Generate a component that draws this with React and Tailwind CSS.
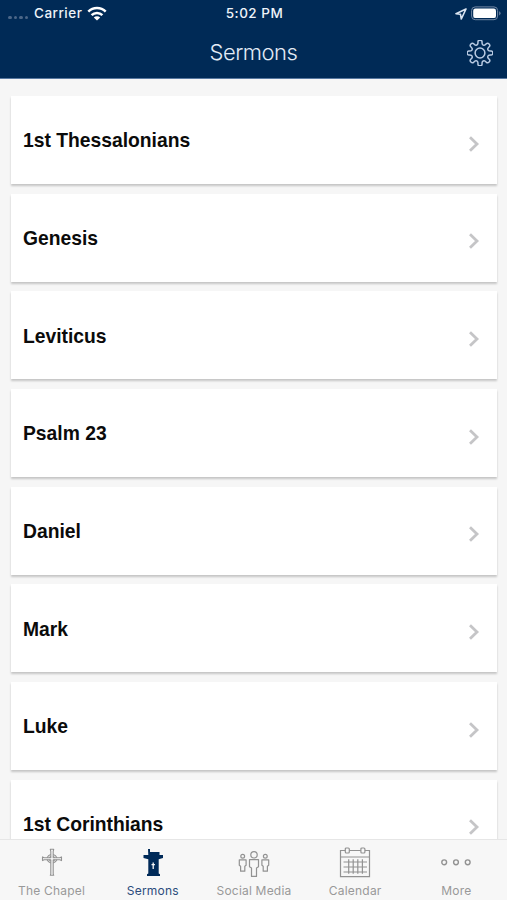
const books = [
  '1st Thessalonians',
  'Genesis',
  'Leviticus',
  'Psalm 23',
  'Daniel',
  'Mark',
  'Luke',
  '1st Corinthians',
];

// eight rounded teeth, drawn as curves between the midpoints of the corners
const gearPath = () => {
  const corners = [];
  for (let i = 0; i < 8; i++) {
    [[-22.5, 8.3], [-12, 9.3], [-9.5, 13], [9.5, 13], [12, 9.3]].forEach(([offset, r]) => {
      const a = ((i * 45 + offset) * Math.PI) / 180;
      corners.push([13 + r * Math.sin(a), 13 - r * Math.cos(a)]);
    });
  }
  const mid = (p, q) => `${((p[0] + q[0]) / 2).toFixed(2)} ${((p[1] + q[1]) / 2).toFixed(2)}`;
  const curves = corners.map((p, i) => {
    const next = corners[(i + 1) % corners.length];
    return `Q${p[0].toFixed(2)} ${p[1].toFixed(2)} ${mid(p, next)}`;
  });
  return `M${mid(corners[corners.length - 1], corners[0])}${curves.join('')}Z`;
};

const GearIcon = () => (
  <svg width="26" height="26" viewBox="0 0 26 26" fill="none" stroke="#b9cbe3" strokeWidth="1.5" strokeLinejoin="round">
    <path d={gearPath()} />
    <circle cx="13" cy="13" r="4.9" />
  </svg>
);

const WifiIcon = () => (
  <svg width="20" height="16" viewBox="0 0 20 16" fill="none" stroke="#fff" strokeWidth="2.5">
    <path d="M1.3 5.7a12.3 12.3 0 0 1 17.4 0" />
    <path d="M4.6 9.2a7.6 7.6 0 0 1 10.8 0" />
    <path d="M10 14.6L6.8 11.5a4.5 4.5 0 0 1 6.4 0Z" fill="#fff" stroke="none" />
  </svg>
);

const LocationIcon = () => (
  <svg width="12" height="12" viewBox="0 0 12 12" fill="none" stroke="#dbe5f1" strokeWidth="1.6" strokeLinejoin="round">
    <path d="M11 1L1 5.7l4.5.6.8 4.7Z" />
  </svg>
);

const BatteryIcon = () => (
  <svg width="30" height="15" viewBox="0 0 30 15">
    <rect x=".6" y=".9" width="26" height="12.8" rx="3.6" fill="none" stroke="#7288a5" strokeWidth="1" />
    <rect x="2.2" y="2.5" width="22.8" height="9.6" rx="2.2" fill="#fff" />
    <path d="M28.2 5.2v4.2q1.3-.6 1.3-2.1t-1.3-2.1Z" fill="#7288a5" />
  </svg>
);

const ChapelIcon = () => (
  <svg width="34" height="34" viewBox="0 0 34 34" fill="none" stroke="#929292" strokeWidth="1.1" strokeLinejoin="round">
    <path d="M15.3 3.3h3.4l-.5 2v6.4h6.600l1.700-.8v3.700l-1.700-.8h-6.600v14l.5 1.500h-3.400l.5-1.500v-14H9.200l-1.700.8v-3.700l1.700.8h6.600V5.300Z" />
    <path d="M15.800 8.500q-2.600.8-3.700 3.200M18.200 8.500q2.600.8 3.700 3.200M21.900 13.800q-1.100 2.400-3.700 3.200M12.100 13.800q1.100 2.400 3.700 3.200M15.800 10.300l-1.600 1.400M18.200 10.300l1.600 1.400M19.800 13.800l-1.600 1.400M14.200 13.800l1.600 1.400" />
  </svg>
);

const SermonsIcon = () => (
  <svg width="34" height="34" viewBox="0 0 34 34">
    <path d="M12 3h2v3h9.500v3H27v3l-4.300 1.300v14.200l1.300.7V30H11v-1.800l1.300-.7V13.300L7.500 12V9h4.800Z" fill="#002a59" />
    <path d="M17.200 16.500V23M15.500 18.700h3.400" stroke="#f7f7f7" strokeWidth="1.300" />
  </svg>
);

const SocialIcon = () => (
  <svg width="34" height="34" viewBox="0 0 34 34" fill="none" stroke="#929292" strokeWidth="1.2" strokeLinejoin="round">
    <circle cx="17" cy="8.800" r="3.200" />
    <path d="M12.500 13.600h9v7.200l-2 1.200v8.400h-5V22l-2-1.200Z" />
    <circle cx="5.700" cy="10.300" r="1.900" />
    <path d="M2.300 13.800h6.800v5.400l-1.300 1v5H3.600v-5l-1.300-1Z" />
    <circle cx="28.300" cy="10.300" r="1.900" />
    <path d="M24.900 13.800h6.800v5.400l-1.300 1v5h-4.200v-5l-1.300-1Z" />
  </svg>
);

const CalendarIcon = () => (
  <svg width="34" height="34" viewBox="0 0 34 34" fill="none" stroke="#929292" strokeWidth="1.2">
    <path d="M7.300 4.500H2.500v26.200h29V4.500h-4.600M11.300 4.500h11.600M2.500 11h29" />
    <rect x="7.300" y="2" width="4" height="5" rx="1" />
    <rect x="22.900" y="2" width="4" height="5" rx="1" />
    <path d="M5.500 16h23.500M5.500 21h23.500M5.500 26h23.500M10.700 13.300v14.500M15.200 13.300v14.500M19.800 13.300v14.500M24.400 13.300v14.500" />
  </svg>
);

const MoreIcon = () => (
  <svg width="34" height="34" viewBox="0 0 34 34" fill="none" stroke="#929292" strokeWidth="1.4">
    <circle cx="5.200" cy="16.300" r="2.400" />
    <circle cx="17" cy="16.300" r="2.400" />
    <circle cx="28.700" cy="16.300" r="2.400" />
  </svg>
);

const tabs = [
  { label: 'The Chapel', icon: ChapelIcon },
  { label: 'Sermons', icon: SermonsIcon, active: true },
  { label: 'Social Media', icon: SocialIcon },
  { label: 'Calendar', icon: CalendarIcon },
  { label: 'More', icon: MoreIcon },
];

const StatusBar = () => (
  <div className="grid h-[27px] grid-cols-3 items-center pl-2 pr-1.5 text-[13.5px] font-medium text-[#eef3f9]">
    <div className="flex items-center">
      <div className="mt-2 flex gap-0.5">
        {[0, 1, 2, 3].map((i) => (
          <span key={i} className="size-[3.5px] rounded-full bg-[#4b6788]" />
        ))}
      </div>
      <span className="ml-1.5 mr-[5px] tracking-[0.5px]">Carrier</span>
      <WifiIcon />
    </div>
    <span className="text-center tracking-[0.5px]">5:02 PM</span>
    <div className="flex items-center justify-end gap-1">
      <LocationIcon />
      <BatteryIcon />
    </div>
  </div>
);

const Header = () => (
  <header className="h-[79px] shrink-0 border-b border-[#5878a0] bg-[#002a56]">
    <StatusBar />
    <div className="grid h-[51px] grid-cols-[54px_1fr_54px] items-center">
      <h1 className="col-start-2 text-center text-[22px] font-light tracking-[-0.5px] text-[#e3ebf5]">Sermons</h1>
      <button className="mt-px flex justify-center"><GearIcon /></button>
    </div>
  </header>
);

const SermonCard = ({ title }) => (
  <li className="flex h-[88px] shrink-0 items-center justify-between bg-white pl-3 pr-[17px] shadow-[0_1.5px_2px_rgba(0,0,0,0.2)]">
    <span className="mt-[3.5px] font-['Liberation_Sans',Arial,sans-serif] text-[19.3px] font-bold text-[#0b0b0b]">{title}</span>
    <svg className="mt-[7px]" width="12" height="16" viewBox="0 0 12 16" fill="none" stroke="#c5c5c7" strokeWidth="2.8">
      <path d="M2 1.3L9 8l-7 6.7" />
    </svg>
  </li>
);

const TabBar = () => (
  <nav className="grid h-[61px] shrink-0 grid-cols-5 border-t border-[#e6e6e6] bg-[#f7f7f7] pl-px">
    {tabs.map(({ label, icon: Icon, active }) => (
      <button key={label} className="flex flex-col items-center pt-1.5">
        <Icon />
        <span className={`mt-[3px] whitespace-nowrap text-[12px] leading-4 tracking-[0.2px] ${active ? 'text-[#2c4c7c]' : 'text-[#999]'}`}>{label}</span>
      </button>
    ))}
  </nav>
);

export default function App() {
  return (
    <div className="flex h-screen flex-col overflow-hidden bg-[#f6f6f6] font-['Inter',sans-serif]">
      <Header />
      <ul className="flex min-h-0 flex-1 flex-col gap-[9.7px] overflow-hidden pl-[11px] pr-2.5 pt-[17px]">
        {books.map((title) => <SermonCard key={title} title={title} />)}
      </ul>
      <TabBar />
    </div>
  );
}
